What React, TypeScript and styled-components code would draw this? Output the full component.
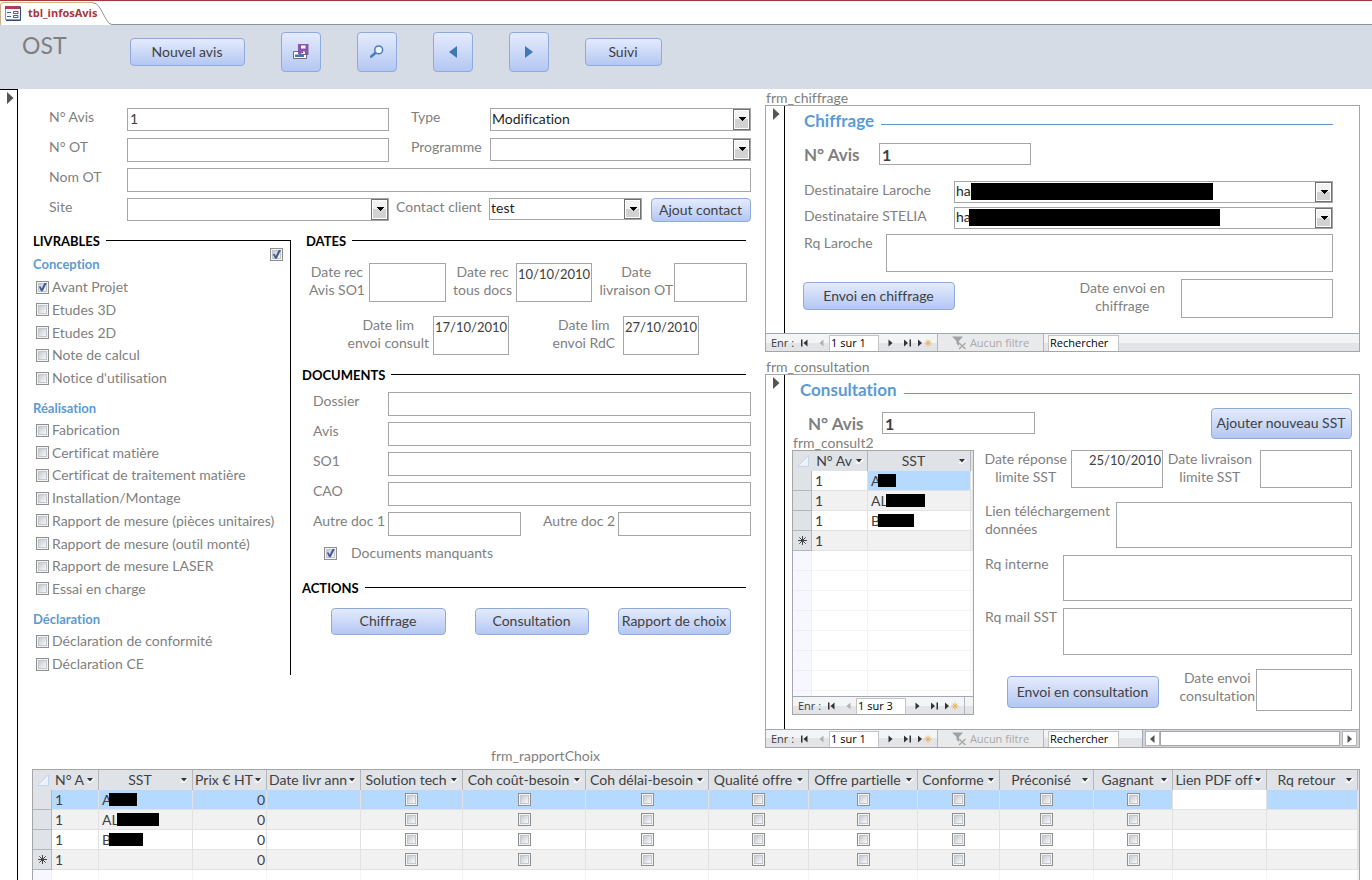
import React, { useId } from "react";
import styled, { createGlobalStyle, css } from "styled-components";

const c = {
  label: "#7f7f7f",
  text: "#404040",
  border: "#a6a6a6",
  blue: "#5b9bd5",
  head: "#dfe3e8",
  select: "#b5d9ff",
};

const uiFont = '"Open Sans", "Noto Sans", sans-serif';

const GlobalStyle = createGlobalStyle`
  *, *::before, *::after { box-sizing: border-box; }
  body { margin: 0; background: #fff; font-family: Lato, "Liberation Sans", sans-serif; font-size: 14px; font-variant-ligatures: none; color: ${c.text}; }
  input, select, textarea, button { font: inherit; font-variant-ligatures: none; color: inherit; margin: 0; border-radius: 0; }
  h1, h2, h3, ul { margin: 0; padding: 0; font-weight: normal; }
`;

/* ---------- page frame ---------- */

const Page = styled.div`
  display: flex;
  flex-direction: column;
  min-height: 100vh;
  border-top: 1px solid #a4373a;
`;

const TabBar = styled.nav`
  display: flex;
  height: 24px;
  border-bottom: 1px solid #8c9097;
`;

const Tab = styled.a`
  position: relative;
  display: flex;
  align-items: center;
  width: 112px;
  height: 24px;
  padding-left: 5px;
  color: #a4373a;
  font: 700 11px/22px ${uiFont};
  text-decoration: none;
`;

const TabShape = styled.svg`
  position: absolute;
  left: 0;
  top: 0;
`;

const TabContent = styled.span`
  position: relative;
  display: flex;
  align-items: center;
  gap: 6px;
`;

const Toolbar = styled.header`
  display: flex;
  align-items: center;
  gap: 36px;
  height: 64px;
  padding: 0 0 10px 22px;
  background: #d5dce6;
`;

const AppTitle = styled.h1`
  width: 72px;
  align-self: flex-start;
  padding-top: 5px;
  font-size: 23px;
  line-height: 30px;
  color: ${c.label};
`;

const Body = styled.div`
  display: flex;
  flex: 1;
`;

const Selector = styled.div<{ $main?: boolean }>`
  flex: none;
  width: ${(p) => (p.$main ? 18 : 19)}px;
  padding: 2px 0 0 7px;
  border-right: 1px solid #000;
  ${(p) => p.$main && css`border-top: 1px solid #000;`}
  svg { display: block; }
`;

const Main = styled.main`
  display: flex;
  flex: 1;
  flex-direction: column;
  min-width: 0;
`;

const Columns = styled.div`
  display: grid;
  grid-template-columns: minmax(0, 747fr) minmax(0, 607fr);
`;

const LeftPane = styled.section`
  padding: 19px 14px 0 15px;
`;

const RightPane = styled.section`
  padding-right: 12px;
`;

/* ---------- buttons ---------- */

const Button = styled.button<{ $w?: number; $h?: number }>`
  display: flex;
  flex: none;
  align-items: center;
  justify-content: center;
  width: ${(p) => (p.$w ? p.$w + "px" : "auto")};
  height: ${(p) => p.$h ?? 28}px;
  padding: 0 1px 1px 0;
  border: 1px solid #8faadc;
  border-radius: 4px;
  background: linear-gradient(#e4ebfc, #b4c7f3);
  color: ${c.text};
  line-height: 18px;
  white-space: nowrap;
`;

const ContactButton = styled(Button)`
  justify-self: end;
`;

/* ---------- fields ---------- */

const fieldBox = css`
  width: 100%;
  min-width: 0;
  border: 1px solid ${c.border};
  background: #fff;
  outline: none;
`;

const TextField = styled.input<{ $h?: number; $big?: boolean }>`
  ${fieldBox}
  height: ${(p) => p.$h ?? 24}px;
  padding: 0 2px 3px;
  ${(p) => p.$big && css`padding: 1px 2px 0; font-size: 16px; font-weight: 700; line-height: 20px;`}
`;

const DateField = styled.input<{ $h?: number }>`
  ${fieldBox}
  height: ${(p) => p.$h ?? 39}px;
  padding: 0 1px 18px;
  font-size: 13px;
  text-align: right;
`;

const TextArea = styled.textarea<{ $h: number }>`
  ${fieldBox}
  display: block;
  height: ${(p) => p.$h}px;
  padding: 1px 2px;
  resize: none;
`;

const ComboFrame = styled.div<{ $h?: number }>`
  ${fieldBox}
  position: relative;
  display: flex;
  height: ${(p) => p.$h ?? 23}px;
  color: #1f1f1f;
`;

const ComboSelect = styled.select`
  flex: 1;
  min-width: 0;
  padding: 0 1px 3px;
  border: 0;
  background: none;
  appearance: none;
  outline: none;
`;

const ComboArrow = styled.span`
  display: flex;
  flex: none;
  align-items: center;
  justify-content: center;
  width: 17px;
  border: 1px solid #707070;
  background: linear-gradient(#f2f2f2 50%, #d2d2d2 50%);
  box-shadow: inset 0 0 0 1px #fff;
  pointer-events: none;
`;

const ComboMask = styled.span<{ $x: number; $w: number }>`
  position: absolute;
  left: ${(p) => p.$x}px;
  top: 1px;
  width: ${(p) => p.$w}px;
  height: 17px;
  background: #000;
`;

const Row = styled.div<{ $cols: string; $top?: number }>`
  display: grid;
  grid-template-columns: ${(p) => p.$cols};
  align-items: start;
  margin-top: ${(p) => p.$top ?? 6}px;
`;

const Label = styled.label<{ $indent?: number }>`
  padding-left: ${(p) => p.$indent ?? 0}px;
  color: ${c.label};
  line-height: 18px;
  white-space: nowrap;
`;

const BigLabel = styled.label<{ $indent?: number }>`
  padding-left: ${(p) => p.$indent ?? 0}px;
  color: ${c.label};
  font-size: 17px;
  font-weight: 700;
  line-height: 24px;
  white-space: nowrap;
`;

const StackLabel = styled.label<{ $left?: boolean; $gap?: number }>`
  justify-self: ${(p) => (p.$left ? "start" : "end")};
  padding-right: ${(p) => p.$gap ?? 4}px;
  color: ${c.label};
  line-height: 18px;
  text-align: ${(p) => (p.$left ? "left" : "center")};
  white-space: pre;
`;

const CheckBox = styled.input.attrs({ type: "checkbox" })`
  position: relative;
  flex: none;
  display: block;
  width: 13px;
  height: 13px;
  padding: 2px;
  border: 1px solid #8e8f8f;
  background: linear-gradient(135deg, #c6cad2, #f8f8f8) content-box, #f4f4f4;
  box-shadow: inset 0 0 0 1px #f4f4f4, inset 0 0 0 2px #c3c6cb;
  appearance: none;
  &:checked::after {
    content: "";
    position: absolute;
    inset: 1px;
    background: #405a9c;
    clip-path: polygon(8% 45%, 30% 45%, 42% 66%, 74% 0, 100% 0, 52% 98%, 34% 98%);
  }
`;

/* ---------- headings ---------- */

const Heading = styled.h2<{ $top: number; $indent?: number; $corner?: boolean }>`
  display: flex;
  align-items: flex-end;
  gap: 6px;
  height: 16px;
  margin-top: ${(p) => p.$top}px;
  padding: 0 ${(p) => (p.$corner ? 0 : 5)}px 0 ${(p) => p.$indent ?? 0}px;
  color: #000;
  font-size: 13px;
  font-weight: 700;
  line-height: 14px;
  &::after {
    content: "";
    flex: 1;
    height: 8px;
    border-top: 1px solid #000;
    ${(p) => p.$corner && css`border-right: 1px solid #000;`}
  }
`;

const FormHeading = styled.h2<{ $indent?: number }>`
  display: flex;
  align-items: center;
  gap: 7px;
  padding-left: ${(p) => p.$indent ?? 0}px;
  color: ${c.blue};
  font-size: 17px;
  font-weight: 700;
  line-height: 20px;
  &::after {
    content: "";
    flex: 1;
    height: 1px;
    margin-top: 7px;
    background: ${c.blue};
  }
`;

/* ---------- left pane groups ---------- */

const Lower = styled.div`
  display: grid;
  grid-template-columns: 258px minmax(0, 1fr);
  column-gap: 11px;
`;

const AvisBlock = styled.div`
  padding-left: 16px;
`;

const Deliverables = styled.div`
  height: 427px;
  border-right: 1px solid #000;
`;

const GroupTitle = styled.h3<{ $top?: number }>`
  margin: ${(p) => p.$top ?? 10}px 0 2px;
  color: ${c.blue};
  font-size: 13px;
  font-weight: 700;
  line-height: 20px;
`;

const GroupHead = styled.div`
  display: flex;
  align-items: flex-start;
  justify-content: space-between;
  padding: 0 7px 1px 0;
`;

const CheckList = styled.ul<{ $min: number }>`
  display: flex;
  flex-direction: column;
  justify-content: space-between;
  min-height: ${(p) => p.$min}px;
  padding-left: 3px;
  list-style: none;
`;

const CheckItem = styled.li`
  display: flex;
  align-items: center;
  gap: 3px;
  height: 20px;
`;

const MissingDocs = styled.div`
  display: flex;
  align-items: center;
  gap: 14px;
  height: 20px;
  margin-top: 7px;
  padding-left: 22px;
`;

const Actions = styled.div`
  display: flex;
  justify-content: space-between;
  margin-top: 13px;
  padding: 0 20px 0 29px;
`;

/* ---------- subforms ---------- */

const SubLabel = styled.div<{ $top?: number; $indent?: number }>`
  height: 16px;
  margin-top: ${(p) => p.$top ?? 0}px;
  padding-left: ${(p) => p.$indent ?? 1}px;
  overflow: hidden;
  color: ${c.label};
  line-height: 18px;
`;

const SubForm = styled.section`
  border: 1px solid ${c.border};
`;

const SubBody = styled.div`
  display: flex;
`;

const SubContent = styled.div<{ $pad: string }>`
  flex: 1;
  min-width: 0;
  padding: ${(p) => p.$pad};
`;

const SendRow = styled.div`
  display: flex;
  align-items: flex-start;
  margin-top: 7px;
`;

const SendButton = styled(Button)`
  margin: 3px auto 0 -1px;
`;

const SendDate = styled.div`
  width: 152px;
`;

const ConsultTop = styled.div`
  display: flex;
  align-items: flex-start;
  justify-content: space-between;
  height: 42px;
  margin-top: 8px;
`;

const ConsultGrid = styled.div`
  display: grid;
  grid-template-columns: 182px minmax(0, 1fr);
  column-gap: 11px;
`;

const ConsultSend = styled.div`
  display: flex;
  padding: 7px 0 0 22px;
`;

/* ---------- record navigator ---------- */

const NavBar = styled.div`
  display: flex;
  height: 18px;
  border-top: 1px solid #a3a7b3;
  background: linear-gradient(#f3f4f6 50%, #e2e4e8 50%);
  color: #3c3c3c;
  font: 11px/17px ${uiFont};
  overflow: hidden;
`;

const NavCaption = styled.span`
  flex: none;
  width: 29px;
  padding-left: 5px;
  white-space: nowrap;
`;

const NavButton = styled.button<{ $w: number }>`
  display: flex;
  flex: none;
  align-items: center;
  justify-content: center;
  width: ${(p) => p.$w}px;
  padding: 0;
  border: 0;
  background: none;
`;

const NavField = styled.input<{ $w: number }>`
  flex: none;
  width: ${(p) => p.$w}px;
  margin-top: 1px;
  padding: 0 1px 2px;
  border: 1px solid #c4c4c4;
  border-bottom: 0;
  background: #fff;
  color: #000;
  outline: none;
`;

const NavFilter = styled.span`
  display: flex;
  flex: none;
  align-items: center;
  justify-content: center;
  gap: 3px;
  width: 107px;
  margin-right: 4px;
  border: solid #b3b6bd;
  border-width: 0 1px;
  background: #e9eaec;
  color: #a9a9a9;
`;

const NavEdge = styled.span`
  width: 1px;
  background: #b3b6bd;
`;

const ScrollTrack = styled.div`
  display: flex;
  flex: 1;
  margin-left: 23px;
  padding: 1px 2px;
  border-left: 1px solid #a3a7b3;
  background: #d4d4d4;
`;

const ScrollThumb = styled.span`
  flex: 1;
  margin-right: 2px;
  border: 1px solid #a6a6a6;
  background: #fff;
`;

const ScrollArrow = styled.button`
  display: flex;
  align-items: center;
  justify-content: center;
  width: 15px;
  padding: 0;
  border: 1px solid #b4b4b4;
  background: #fff;
`;

/* ---------- datasheets ---------- */

const SheetFrame = styled.div<{ $fill?: boolean }>`
  display: flex;
  flex-direction: column;
  border: 1px solid ${c.border};
  overflow: hidden;
  ${(p) => (p.$fill ? css`flex: 1 1 0; min-height: 110px; border-bottom: 0;` : css`height: 265px;`)}
`;

const SheetScroll = styled.div`
  flex: 1 1 0;
  min-height: 0;
  overflow: hidden;
`;

const Sheet = styled.table`
  width: 100%;
  border-spacing: 0;
  table-layout: fixed;
`;

const Th = styled.th`
  height: 20px;
  padding: 0;
  border-right: 1px solid #b3b6bb;
  background: ${c.head};
  font-weight: normal;
  &:first-child, &:last-child { border-right: 0; }
`;

const ThInner = styled.span`
  display: flex;
  align-items: center;
  gap: 1px;
  height: 20px;
  padding: 0 3px 0 2px;
  svg { flex: none; }
`;

const ThText = styled.span`
  flex: 1;
  min-width: 0;
  overflow: hidden;
  line-height: 20px;
  text-align: center;
  white-space: nowrap;
`;

type Tone = "plain" | "alt" | "selected" | "blank";
const toneBg = { plain: "#fff", alt: "#f1f1f1", selected: c.select, blank: "#fff" };

const Td = styled.td<{ $tone: Tone; $right?: boolean }>`
  height: 20px;
  padding: 0 ${(p) => (p.$right ? 1 : 3)}px;
  border: solid ${(p) => (p.$tone === "blank" ? "#f4f4f4" : "#e2e2e2")};
  border-width: 0 1px 1px 0;
  background: ${(p) => toneBg[p.$tone]};
  line-height: 19px;
  text-align: ${(p) => (p.$right ? "right" : "left")};
  white-space: nowrap;
  overflow: hidden;
  input { margin: 0 auto; }
`;

const RowHead = styled.th<{ $blank?: boolean }>`
  height: 20px;
  padding: 0;
  border: solid ${(p) => (p.$blank ? "#eceef8" : "#b3b6bb")};
  border-width: 0 1px 1px 0;
  background: ${(p) => (p.$blank ? "#f6f7ff" : c.head)};
  svg { display: block; margin: 0 auto; }
`;

const Masked = styled.span`
  display: flex;
  align-items: center;
  height: 19px;
`;

const Mask = styled.span<{ $w: number }>`
  width: ${(p) => p.$w}px;
  height: 13px;
  margin-left: -2px;
  background: #000;
`;

const Report = styled.section`
  display: flex;
  flex: 1;
  flex-direction: column;
  padding: 0 12px 0 14px;
`;

const ReportLabel = styled.div`
  height: 21px;
  padding-left: 459px;
  color: ${c.label};
  line-height: 16px;
`;

/* ---------- drawings ---------- */

const RecordMark = () => (
  <svg width="7" height="12" viewBox="0 0 7 12"><path d="M0 0L6.5 6L0 12Z" fill="#555" /></svg>
);

const DownArrow = () => (
  <svg width="8" height="5" viewBox="0 0 8 5" shapeRendering="crispEdges"><path d="M0 0H8L4 4Z" fill="#000" /></svg>
);

const HeadArrow = () => (
  <svg width="9" height="6" viewBox="0 0 9 6"><path d="M0 5L4 6L9 2L7 1Z" fill="#fff" /><path d="M1 1H7L4 4.500Z" fill="#333" /></svg>
);

const FormIcon = () => (
  <svg width="17" height="15" viewBox="0 0 17 15">
    <rect x="0.5" y="0.5" width="15" height="13" fill="#f4f6fb" stroke="#8c97b4" />
    <path d="M0 0H15V3H0Z" fill="#b23a52" />
    <path d="M15.500 1V14.500H1" fill="none" stroke="#2f4a80" />
    <path d="M2 6.500H6M2 10.500H6" stroke="#4a6090" />
    <path d="M8.500 5.500H13V7.500H8.500ZM8.500 9.500H13V11.500H8.500Z" fill="#fff" stroke="#4a6090" />
  </svg>
);

const SaveIcon = () => (
  <svg width="16" height="16" viewBox="0 0 16 16">
    <path d="M0.500 7.500H13.500V14.500H0.500Z" fill="#fff" stroke="#6b6b6b" />
    <path d="M2 10.500H11V13H2Z" fill="#3c78b4" />
    <path d="M5 0H15.500V11H6.500L5 9.500Z" fill="#8a56ac" />
    <path d="M8 1.500H12.500V4.500H8ZM8.500 7.500H12V10H8.500Z" fill="#fff" />
    <path d="M8.500 7.500H10V9H8.500Z" fill="#5a3a78" />
  </svg>
);

const FindIcon = () => (
  <svg width="14" height="13" viewBox="0 0 14 13">
    <path d="M1.200 11.600L6 7.600" stroke="#4a7db8" strokeWidth="2.600" strokeLinecap="round" />
    <circle cx="8.700" cy="4.900" r="3.900" fill="#eef4fd" stroke="#4a7db8" strokeWidth="1.500" />
  </svg>
);

const StepIcon = ({ back }: { back?: boolean }) => (
  <svg width="8" height="12" viewBox="0 0 8 12"><path d={back ? "M8 0V12L0 6Z" : "M0 0V12L8 6Z"} fill="#4178b4" /></svg>
);

const NavIcon = ({ kind }: { kind: "first" | "prev" | "next" | "last" | "new" }) => (
  <svg width={kind === "new" ? 14 : 7} height="8" viewBox={kind === "new" ? "0 0 14 8" : "0 0 7 8"}>
    {kind === "first" && <path d="M0 0.500H1.500V7.500H0ZM6.500 0.500V7.500L2.500 4Z" fill="#333" />}
    {kind === "prev" && <path d="M5.500 0.500V7.500L1.500 4Z" fill="#b0b0b0" />}
    {kind === "next" && <path d="M1.500 0.500V7.500L5.500 4Z" fill="#333" />}
    {kind === "last" && <path d="M0 0.500V7.500L4 4ZM5.500 0.500H7V7.500H5.500Z" fill="#333" />}
    {kind === "new" && (
      <>
        <path d="M0 0.500V7.500L4 4Z" fill="#333" />
        <path d="M10 0.500V7.500M6.500 4H13.500M7.600 1.600L12.400 6.400M12.400 1.600L7.600 6.400" stroke="#e9b35c" />
      </>
    )}
  </svg>
);

const FilterIcon = () => (
  <svg width="15" height="14" viewBox="0 0 15 14">
    <path d="M0 0.500H11L7 5V10L4.500 7.500V5Z" fill="#a2a2a2" />
    <path d="M7 7L13.500 13M13.500 7L7 13" stroke="#a9a9a9" strokeWidth="1.500" />
  </svg>
);

const StarIcon = () => (
  <svg width="9" height="9" viewBox="0 0 9 9">
    <path d="M4.500 0V9M0 4.500H9M1.300 1.300L7.700 7.700M7.700 1.300L1.300 7.700" stroke="#444" />
  </svg>
);

const CornerIcon = () => (
  <svg width="12" height="12" viewBox="0 0 12 12"><path d="M11.500 0.500V11.500H0.500Z" fill="#eef2f8" stroke="#c3d6ec" /></svg>
);

/* ---------- composed parts ---------- */

function Combo({ id, value, h, mask }: { id: string; value?: string; h?: number; mask?: [number, number] }) {
  return (
    <ComboFrame $h={h}>
      <ComboSelect id={id} defaultValue={value}>
        <option>{value ?? ""}</option>
      </ComboSelect>
      {mask && <ComboMask $x={mask[0]} $w={mask[1]} />}
      <ComboArrow><DownArrow /></ComboArrow>
    </ComboFrame>
  );
}

function Checks({ items, min, checked }: { items: string[]; min: number; checked?: string }) {
  const base = useId();
  return (
    <CheckList $min={min}>
      {items.map((t) => (
        <CheckItem key={t}>
          <CheckBox id={base + t} defaultChecked={t === checked} />
          <Label htmlFor={base + t}>{t}</Label>
        </CheckItem>
      ))}
    </CheckList>
  );
}

function RecordNav({ pos, mini, scroll }: { pos: string; mini?: boolean; scroll?: boolean }) {
  return (
    <NavBar>
      <NavCaption>Enr :</NavCaption>
      <NavButton $w={18} aria-label="Premier"><NavIcon kind="first" /></NavButton>
      <NavButton $w={16} aria-label="Précédent"><NavIcon kind="prev" /></NavButton>
      <NavField $w={50} aria-label="Enregistrement" defaultValue={pos} />
      <NavButton $w={22} aria-label="Suivant"><NavIcon kind="next" /></NavButton>
      <NavButton $w={12} aria-label="Dernier"><NavIcon kind="last" /></NavButton>
      <NavButton $w={24} aria-label="Nouveau"><NavIcon kind="new" /></NavButton>
      {mini ? (
        <NavEdge />
      ) : (
        <>
          <NavFilter><FilterIcon />Aucun filtre</NavFilter>
          <NavField $w={71} aria-label="Rechercher" defaultValue="Rechercher" />
        </>
      )}
      {scroll && (
        <ScrollTrack>
          <ScrollArrow aria-label="Gauche"><svg width="5" height="8" viewBox="0 0 5 8"><path d="M4.500 0V8L0 4Z" fill="#555" /></svg></ScrollArrow>
          <ScrollThumb />
          <ScrollArrow aria-label="Droite"><svg width="5" height="8" viewBox="0 0 5 8"><path d="M0.500 0V8L5 4Z" fill="#555" /></svg></ScrollArrow>
        </ScrollTrack>
      )}
    </NavBar>
  );
}

type Col = { name: string; w: number; kind?: "check" | "num"; active?: boolean };
type Cell = string | { t: string; mask: number };

function DataSheet({ cols, rows, blanks, offset = 0 }: { cols: Col[]; rows: Cell[][]; blanks: number; offset?: number }) {
  const tones: Tone[] = ["selected", "alt", "plain", "alt"];
  return (
    <Sheet>
      <colgroup>
        <col width={19} />
        {cols.map((k) => <col key={k.name} width={k.w} />)}
        <col />
      </colgroup>
      <thead>
        <tr>
          <Th><CornerIcon /></Th>
          {cols.map((k) => (
            <Th key={k.name} scope="col"><ThInner><ThText>{k.name}</ThText><HeadArrow /></ThInner></Th>
          ))}
          <Th />
        </tr>
      </thead>
      <tbody>
        {rows.map((r, i) => (
          <tr key={i}>
            <RowHead scope="row">{i === rows.length - 1 && <StarIcon />}</RowHead>
            {cols.map((k, j) => {
              const cell = r[j] ?? "";
              const white = i === 0 && (k.active || j < offset);
              return (
                <Td key={k.name} $tone={white ? "plain" : tones[i]} $right={k.kind === "num"}>
                  {k.kind === "check" ? (
                    <CheckBox aria-label={k.name} />
                  ) : typeof cell === "string" ? (
                    cell
                  ) : (
                    <Masked>{cell.t}<Mask $w={cell.mask} /></Masked>
                  )}
                </Td>
              );
            })}
            <Td $tone={i === 0 ? "plain" : tones[i]} />
          </tr>
        ))}
        {Array.from({ length: blanks }, (_, i) => (
          <tr key={"b" + i}>
            <RowHead $blank />
            {cols.map((k) => <Td key={k.name} $tone="blank" />)}
            <Td $tone="blank" />
          </tr>
        ))}
      </tbody>
    </Sheet>
  );
}

const consultCols: Col[] = [{ name: "N° Av", w: 56 }, { name: "SST", w: 103 }];
const consultRows: Cell[][] = [
  ["1", { t: "A", mask: 18 }],
  ["1", { t: "AL", mask: 39 }],
  ["1", { t: "B", mask: 36 }],
  ["1", ""],
];

const reportCols: Col[] = [
  { name: "N° A", w: 47 },
  { name: "SST", w: 94 },
  { name: "Prix € HT", w: 74, kind: "num" },
  { name: "Date livr ann", w: 94 },
  { name: "Solution tech", w: 102, kind: "check" },
  { name: "Coh coût-besoin", w: 123, kind: "check" },
  { name: "Coh délai-besoin", w: 123, kind: "check" },
  { name: "Qualité offre", w: 100, kind: "check" },
  { name: "Offre partielle", w: 109, kind: "check" },
  { name: "Conforme", w: 82, kind: "check" },
  { name: "Préconisé", w: 94, kind: "check" },
  { name: "Gagnant", w: 79, kind: "check" },
  { name: "Lien PDF off", w: 94, active: true },
  { name: "Rq retour", w: 91 },
];
const reportRows: Cell[][] = [
  ["1", { t: "A", mask: 28 }, "0"],
  ["1", { t: "AL", mask: 42 }, "0"],
  ["1", { t: "B", mask: 34 }, "0"],
  ["1", "", "0"],
];

function AvisFields() {
  const cols = "78px minmax(0, 262fr) 101px minmax(0, 261fr)";
  return (
    <AvisBlock>
      <Row $cols={cols} $top={0}>
        <Label htmlFor="avis">N° Avis</Label><TextField id="avis" $h={23} defaultValue="1" />
        <Label htmlFor="type" $indent={22}>Type</Label><Combo id="type" value="Modification" />
      </Row>
      <Row $cols={cols} $top={7}>
        <Label htmlFor="ot">N° OT</Label><TextField id="ot" />
        <Label htmlFor="prog" $indent={22}>Programme</Label><Combo id="prog" />
      </Row>
      <Row $cols="78px minmax(0, 1fr)">
        <Label htmlFor="nom">Nom OT</Label><TextField id="nom" />
      </Row>
      <Row $cols="78px minmax(0, 262fr) 100px minmax(0, 153fr) 109px">
        <Label htmlFor="site">Site</Label><Combo id="site" />
        <Label htmlFor="contact" $indent={7}>Contact client</Label><Combo id="contact" value="test" h={22} />
        <ContactButton $w={100} $h={24}>Ajout contact</ContactButton>
      </Row>
    </AvisBlock>
  );
}

function Dates() {
  return (
    <>
      <Heading $top={10} $indent={4}>DATES</Heading>
      <Row $cols="67px 77fr 70px 76fr 82px 73fr 4px" $top={15}>
        <StackLabel htmlFor="d1">{"Date rec\nAvis SO1"}</StackLabel><DateField id="d1" />
        <StackLabel htmlFor="d2">{"Date rec\ntous docs"}</StackLabel><DateField id="d2" defaultValue="10/10/2010" />
        <StackLabel htmlFor="d3" $gap={1}>{"Date\nlivraison OT"}</StackLabel><DateField id="d3" />
      </Row>
      <Row $cols="131px 76fr 114px 76fr 52px" $top={14}>
        <StackLabel htmlFor="d4">{"Date lim\nenvoi consult"}</StackLabel><DateField id="d4" defaultValue="17/10/2010" />
        <StackLabel htmlFor="d5" $gap={8}>{"Date lim\nenvoi RdC"}</StackLabel><DateField id="d5" defaultValue="27/10/2010" />
      </Row>
    </>
  );
}

function Documents() {
  return (
    <>
      <Heading $top={11}>DOCUMENTS</Heading>
      {["Dossier", "Avis", "SO1", "CAO"].map((t, i) => (
        <Row key={t} $cols="86px minmax(0, 1fr)" $top={i ? 6 : 10}>
          <Label htmlFor={"doc" + t} $indent={11}>{t}</Label><TextField id={"doc" + t} />
        </Row>
      ))}
      <Row $cols="86px minmax(0, 133fr) 97px minmax(0, 133fr)">
        <Label htmlFor="a1" $indent={11}>Autre doc 1</Label><TextField id="a1" />
        <Label htmlFor="a2" $indent={22}>Autre doc 2</Label><TextField id="a2" />
      </Row>
      <MissingDocs>
        <CheckBox id="missing" defaultChecked /><Label htmlFor="missing">Documents manquants</Label>
      </MissingDocs>
    </>
  );
}

function Chiffrage() {
  return (
    <>
      <SubLabel>frm_chiffrage</SubLabel>
      <SubForm>
        <SubBody>
          <Selector><RecordMark /></Selector>
          <SubContent $pad="5px 26px 15px 19px">
            <FormHeading>Chiffrage</FormHeading>
            <Row $cols="75px 152px" $top={12}>
              <BigLabel htmlFor="c0">N° Avis</BigLabel><TextField id="c0" $big $h={22} defaultValue="1" />
            </Row>
            <Row $cols="150px minmax(0, 1fr)" $top={14}>
              <Label htmlFor="c1">Destinataire Laroche</Label><Combo id="c1" value="ha" h={22} mask={[16, 242]} />
            </Row>
            <Row $cols="150px minmax(0, 1fr)" $top={4}>
              <Label htmlFor="c2">Destinataire STELIA</Label><Combo id="c2" value="ha" h={22} mask={[14, 251]} />
            </Row>
            <Row $cols="82px minmax(0, 1fr)" $top={5}>
              <Label htmlFor="c3">Rq Laroche</Label><TextArea id="c3" $h={38} />
            </Row>
            <SendRow>
              <SendButton $w={152}>Envoi en chiffrage</SendButton>
              <StackLabel htmlFor="c4" $gap={16}>{"Date envoi en\nchiffrage"}</StackLabel>
              <SendDate><DateField id="c4" /></SendDate>
            </SendRow>
          </SubContent>
        </SubBody>
        <RecordNav pos="1 sur 1" />
      </SubForm>
    </>
  );
}

function Consultation() {
  return (
    <>
      <SubLabel $top={6}>frm_consultation</SubLabel>
      <SubForm>
        <SubBody>
          <Selector><RecordMark /></Selector>
          <SubContent $pad="5px 7px 14px 7px">
            <FormHeading $indent={8}>Consultation</FormHeading>
            <ConsultTop>
              <div>
                <Row $cols="90px 153px" $top={4}>
                  <BigLabel htmlFor="s0" $indent={16}>N° Avis</BigLabel><TextField id="s0" $big $h={22} defaultValue="1" />
                </Row>
                <SubLabel $top={-2}>frm_consult2</SubLabel>
              </div>
              <Button $w={141} $h={31}>Ajouter nouveau SST</Button>
            </ConsultTop>
            <ConsultGrid>
              <SheetFrame>
                <SheetScroll><DataSheet cols={consultCols} rows={consultRows} blanks={8} offset={1} /></SheetScroll>
                <RecordNav pos="1 sur 3" mini />
              </SheetFrame>
              <div>
                <Row $cols="86px minmax(0, 92fr) 97px minmax(0, 92fr)" $top={0}>
                  <StackLabel htmlFor="s1">{"Date réponse\nlimite SST"}</StackLabel><DateField id="s1" $h={38} defaultValue="25/10/2010" />
                  <StackLabel htmlFor="s2" $gap={8}>{"Date livraison\nlimite SST"}</StackLabel><DateField id="s2" $h={38} />
                </Row>
                <Row $cols="131px minmax(0, 1fr)" $top={14}>
                  <StackLabel htmlFor="s3" $left>{"Lien téléchargement\ndonnées"}</StackLabel><TextArea id="s3" $h={46} />
                </Row>
                <Row $cols="78px minmax(0, 1fr)" $top={7}>
                  <Label htmlFor="s4">Rq interne</Label><TextArea id="s4" $h={46} />
                </Row>
                <Row $cols="78px minmax(0, 1fr)" $top={7}>
                  <Label htmlFor="s5">Rq mail SST</Label><TextArea id="s5" $h={47} />
                </Row>
                <Row $cols="minmax(0, 174fr) 97px minmax(0, 96fr)" $top={14}>
                  <ConsultSend><Button $w={152} $h={32}>Envoi en consultation</Button></ConsultSend>
                  <StackLabel htmlFor="s6" $gap={1}>{"Date envoi\nconsultation"}</StackLabel><DateField id="s6" $h={42} />
                </Row>
              </div>
            </ConsultGrid>
          </SubContent>
        </SubBody>
        <RecordNav pos="1 sur 1" scroll />
      </SubForm>
    </>
  );
}

export default function App() {
  return (
    <Page>
      <GlobalStyle />
      <TabBar>
        <Tab href="#">
          <TabShape width="112" height="24" viewBox="0 0 112 24">
            <path d="M0.500 24V4Q0.500 1.500 4 1.500H93Q97 1.500 100 7L106 18Q108.500 23.500 112 23.500V24Z" fill="#fff" />
            <path d="M0.500 24V4Q0.500 1.500 4 1.500H92" fill="none" stroke="#cdb08c" />
            <path d="M92 1.500Q97 1.500 100 7L106 18Q108.500 23.500 112 23.500" fill="none" stroke="#9a9690" />
          </TabShape>
          <TabContent><FormIcon />tbl_infosAvis</TabContent>
        </Tab>
      </TabBar>
      <Toolbar>
        <AppTitle>OST</AppTitle>
        <Button $w={115}>Nouvel avis</Button>
        <Button $w={40} $h={40} aria-label="Enregistrer"><SaveIcon /></Button>
        <Button $w={40} $h={40} aria-label="Chercher"><FindIcon /></Button>
        <Button $w={40} $h={40} aria-label="Précédent"><StepIcon back /></Button>
        <Button $w={40} $h={40} aria-label="Suivant"><StepIcon /></Button>
        <Button $w={77}>Suivi</Button>
      </Toolbar>
      <Body>
        <Selector $main><RecordMark /></Selector>
        <Main>
          <Columns>
            <LeftPane>
              <AvisFields />
              <Lower>
                <div>
                  <Heading $top={10} $corner>LIVRABLES</Heading>
                  <Deliverables>
                    <GroupHead>
                      <GroupTitle $top={6}>Conception</GroupTitle>
                      <CheckBox defaultChecked aria-label="Livrables" />
                    </GroupHead>
                    <Checks min={111} checked="Avant Projet" items={["Avant Projet", "Etudes 3D", "Etudes 2D", "Note de calcul", "Notice d'utilisation"]} />
                    <GroupTitle>Réalisation</GroupTitle>
                    <Checks
                      min={179}
                      items={[
                        "Fabrication",
                        "Certificat matière",
                        "Certificat de traitement matière",
                        "Installation/Montage",
                        "Rapport de mesure (pièces unitaires)",
                        "Rapport de mesure (outil monté)",
                        "Rapport de mesure LASER",
                        "Essai en charge",
                      ]}
                    />
                    <GroupTitle>Déclaration</GroupTitle>
                    <Checks min={43} items={["Déclaration de conformité", "Déclaration CE"]} />
                  </Deliverables>
                </div>
                <div>
                  <Dates />
                  <Documents />
                  <Heading $top={16}>ACTIONS</Heading>
                  <Actions>
                    <Button $w={115} $h={27}>Chiffrage</Button>
                    <Button $w={114} $h={27}>Consultation</Button>
                    <Button $w={113} $h={27}>Rapport de choix</Button>
                  </Actions>
                </div>
              </Lower>
            </LeftPane>
            <RightPane>
              <Chiffrage />
              <Consultation />
            </RightPane>
          </Columns>
          <Report>
            <ReportLabel>frm_rapportChoix</ReportLabel>
            <SheetFrame $fill>
              <SheetScroll><DataSheet cols={reportCols} rows={reportRows} blanks={1} /></SheetScroll>
            </SheetFrame>
          </Report>
        </Main>
      </Body>
    </Page>
  );
}
